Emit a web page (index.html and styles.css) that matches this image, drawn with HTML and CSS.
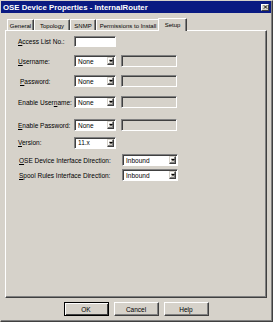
FILE: index.html
```html
<!DOCTYPE html>
<html>
<head>
<meta charset="utf-8">
<link rel="stylesheet" href="styles.css">
</head>
<body>
<div class="window">
  <div class="titlebar">
    <span class="title">OSE Device Properties - InternalRouter</span>
    <span class="close">
      <svg width="6" height="6" viewBox="0 0 6 6"><path d="M0.5 0.5 L5.5 5.5 M5.5 0.5 L0.5 5.5" stroke="#000" stroke-width="1.4"/></svg>
    </span>
  </div>
  <div class="content">
    <div class="tabs">
      <div class="tab t-general">General</div>
      <div class="tab t-topology">Topology</div>
      <div class="tab t-snmp">SNMP</div>
      <div class="tab t-perm">Permissions to Install</div>
      <div class="tab t-setup selected">Setup</div>
    </div>
    <div class="panel">
      <div class="row r1">
        <span class="label"><u>A</u>ccess List No.:</span>
        <span class="textbox small"></span>
      </div>
      <div class="row r2">
        <span class="label"><u>U</u>sername:</span>
        <span class="select small"><span class="val">None</span><span class="btn"><i class="arrow"></i></span></span>
        <span class="textbox disabled"></span>
      </div>
      <div class="row r3">
        <span class="label lp"><u>P</u>assword:</span>
        <span class="select small"><span class="val">None</span><span class="btn"><i class="arrow"></i></span></span>
        <span class="textbox disabled"></span>
      </div>
      <div class="row r4">
        <span class="label">Enable User<u>n</u>ame:</span>
        <span class="select small"><span class="val">None</span><span class="btn"><i class="arrow"></i></span></span>
        <span class="textbox disabled"></span>
      </div>
      <div class="row r5">
        <span class="label"><u>E</u>nable Password:</span>
        <span class="select small"><span class="val">None</span><span class="btn"><i class="arrow"></i></span></span>
        <span class="textbox disabled"></span>
      </div>
      <div class="row r6">
        <span class="label"><u>V</u>ersion:</span>
        <span class="select small"><span class="val">11.x</span><span class="btn"><i class="arrow"></i></span></span>
      </div>
      <div class="row r7">
        <span class="label wide"><u>O</u>SE Device Interface Direction:</span>
        <span class="select large"><span class="val">Inbound</span><span class="btn"><i class="arrow"></i></span></span>
      </div>
      <div class="row r8">
        <span class="label wide"><u>S</u>pool Rules Interface Direction:</span>
        <span class="select large"><span class="val">Inbound</span><span class="btn"><i class="arrow"></i></span></span>
      </div>
    </div>
    <div class="buttons">
      <div class="button default"><span>OK</span></div>
      <div class="button"><span>Cancel</span></div>
      <div class="button"><span>Help</span></div>
    </div>
  </div>
</div>
</body>
</html>
```
FILE: styles.css
```css
html, body {
  margin: 0;
  padding: 0;
  background: #d6d2ca;
}
body {
  font-family: "Liberation Sans", Arial, sans-serif;
  font-size: 6.5px;
  color: #000;
}
.window {
  width: 273px;
  height: 322px;
  box-sizing: border-box;
  border-top: 1px solid #d6d2ca;
  border-left: 1px solid #d6d2ca;
  border-right: 1px solid #404040;
  border-bottom: 1px solid #404040;
  box-shadow: inset -1px -1px 0 #808080;
  display: flex;
  flex-direction: column;
}
.titlebar {
  height: 12px;
  margin: 0 1px 0 0;
  background: #0a1a82;
  display: flex;
  align-items: center;
  justify-content: space-between;
  padding: 0 2px 0 2px;
}
.title {
  color: #fff;
  font-weight: bold;
  font-size: 7.8px;
}
.close {
  width: 8px;
  height: 7px;
  background: #d6d2ca;
  box-sizing: border-box;
  border-top: 1px solid #fff;
  border-left: 1px solid #fff;
  border-right: 1px solid #404040;
  border-bottom: 1px solid #404040;
  display: flex;
  align-items: center;
  justify-content: center;
}
.close svg { display: block; width: 5px; height: 4px; }
.content {
  flex: 1;
  padding: 0 5px 0 4px;
  display: flex;
  flex-direction: column;
}
.tabs {
  height: 17px;
  display: flex;
  align-items: flex-end;
  padding-left: 2px;
  position: relative;
  z-index: 1;
  font-size: 6px;
}
.tab {
  height: 11px;
  box-sizing: border-box;
  border-top: 1px solid #fff;
  border-left: 1px solid #fff;
  border-right: 1px solid #404040;
  box-shadow: inset -1px 0 0 #808080;
  border-radius: 1px 1px 0 0;
  display: flex;
  align-items: center;
  justify-content: center;
  white-space: nowrap;
  padding-top: 1px;
}
.t-general { width: 27px; }
.t-topology { width: 36px; }
.t-snmp { width: 26px; }
.t-perm { width: 64px; }
.tab.selected {
  width: 29px;
  height: 13px;
  margin-left: -2px;
  margin-bottom: -1px;
  background: #d6d2ca;
  padding-bottom: 2px;
}
.panel {
  height: 268px;
  box-sizing: border-box;
  border-top: 1px solid #fff;
  border-left: 1px solid #fff;
  border-right: 1px solid #404040;
  border-bottom: 1px solid #404040;
  box-shadow: inset -1px -1px 0 #808080;
  padding: 5px 0 0 12px;
  display: flex;
  flex-direction: column;
}
.row {
  display: flex;
  align-items: center;
  height: 11px;
}
.r1 { margin-top: 0; }
.r2 { margin-top: 8px; height: 12px; }
.r3 { margin-top: 8px; height: 12px; }
.r4 { margin-top: 9px; height: 12px; }
.r5 { margin-top: 11px; height: 12px; }
.r6 { margin-top: 6px; }
.r7 { margin-top: 6px; height: 12px; }
.r8 { margin-top: 3px; height: 12px; }
.label {
  width: 56px;
  white-space: nowrap;
}
.label.lp { padding-left: 2px; width: 54px; }
.label.wide { width: 103px; padding-left: 1px; }
.textbox {
  box-sizing: border-box;
  height: 11px;
  border-top: 1px solid #808080;
  border-left: 1px solid #808080;
  border-right: 1px solid #fff;
  border-bottom: 1px solid #fff;
  box-shadow: inset 1px 1px 0 #404040;
  background: #fff;
}
.textbox.small { width: 42px; }
.textbox.disabled {
  width: 56px;
  height: 12px;
  margin-left: 5px;
  background: #d6d2ca;
}
.select {
  box-sizing: border-box;
  height: 12px;
  border-top: 1px solid #808080;
  border-left: 1px solid #808080;
  border-right: 1px solid #fff;
  border-bottom: 1px solid #fff;
  box-shadow: inset 1px 1px 0 #404040;
  background: #fff;
  display: flex;
  align-items: stretch;
  padding: 1px 1px 1px 2px;
}
.select.small { width: 42px; }
.select.large { width: 56px; }
.select .val {
  flex: 1;
  display: flex;
  align-items: center;
  padding-left: 1px;
}
.select .btn {
  width: 7px;
  box-sizing: border-box;
  background: #d6d2ca;
  border-top: 1px solid #d6d2ca;
  border-left: 1px solid #d6d2ca;
  border-right: 1px solid #404040;
  border-bottom: 1px solid #404040;
  box-shadow: inset -1px -1px 0 #808080, inset 1px 1px 0 #fff;
  display: flex;
  align-items: center;
  justify-content: center;
}
.arrow {
  width: 0;
  height: 0;
  border-left: 2px solid transparent;
  border-right: 2px solid transparent;
  border-top: 2px solid #000;
}
.buttons {
  display: flex;
  justify-content: center;
  gap: 5px;
  margin-top: 4px;
}
.button {
  width: 45px;
  height: 14px;
  box-sizing: border-box;
  border-top: 1px solid #fff;
  border-left: 1px solid #fff;
  border-right: 1px solid #404040;
  border-bottom: 1px solid #404040;
  box-shadow: inset -1px -1px 0 #808080;
  display: flex;
  align-items: center;
  justify-content: center;
}
.button.default {
  border: 1px solid #000;
  box-shadow: inset 1px 1px 0 #fff, inset -1px -1px 0 #404040;
}
```
